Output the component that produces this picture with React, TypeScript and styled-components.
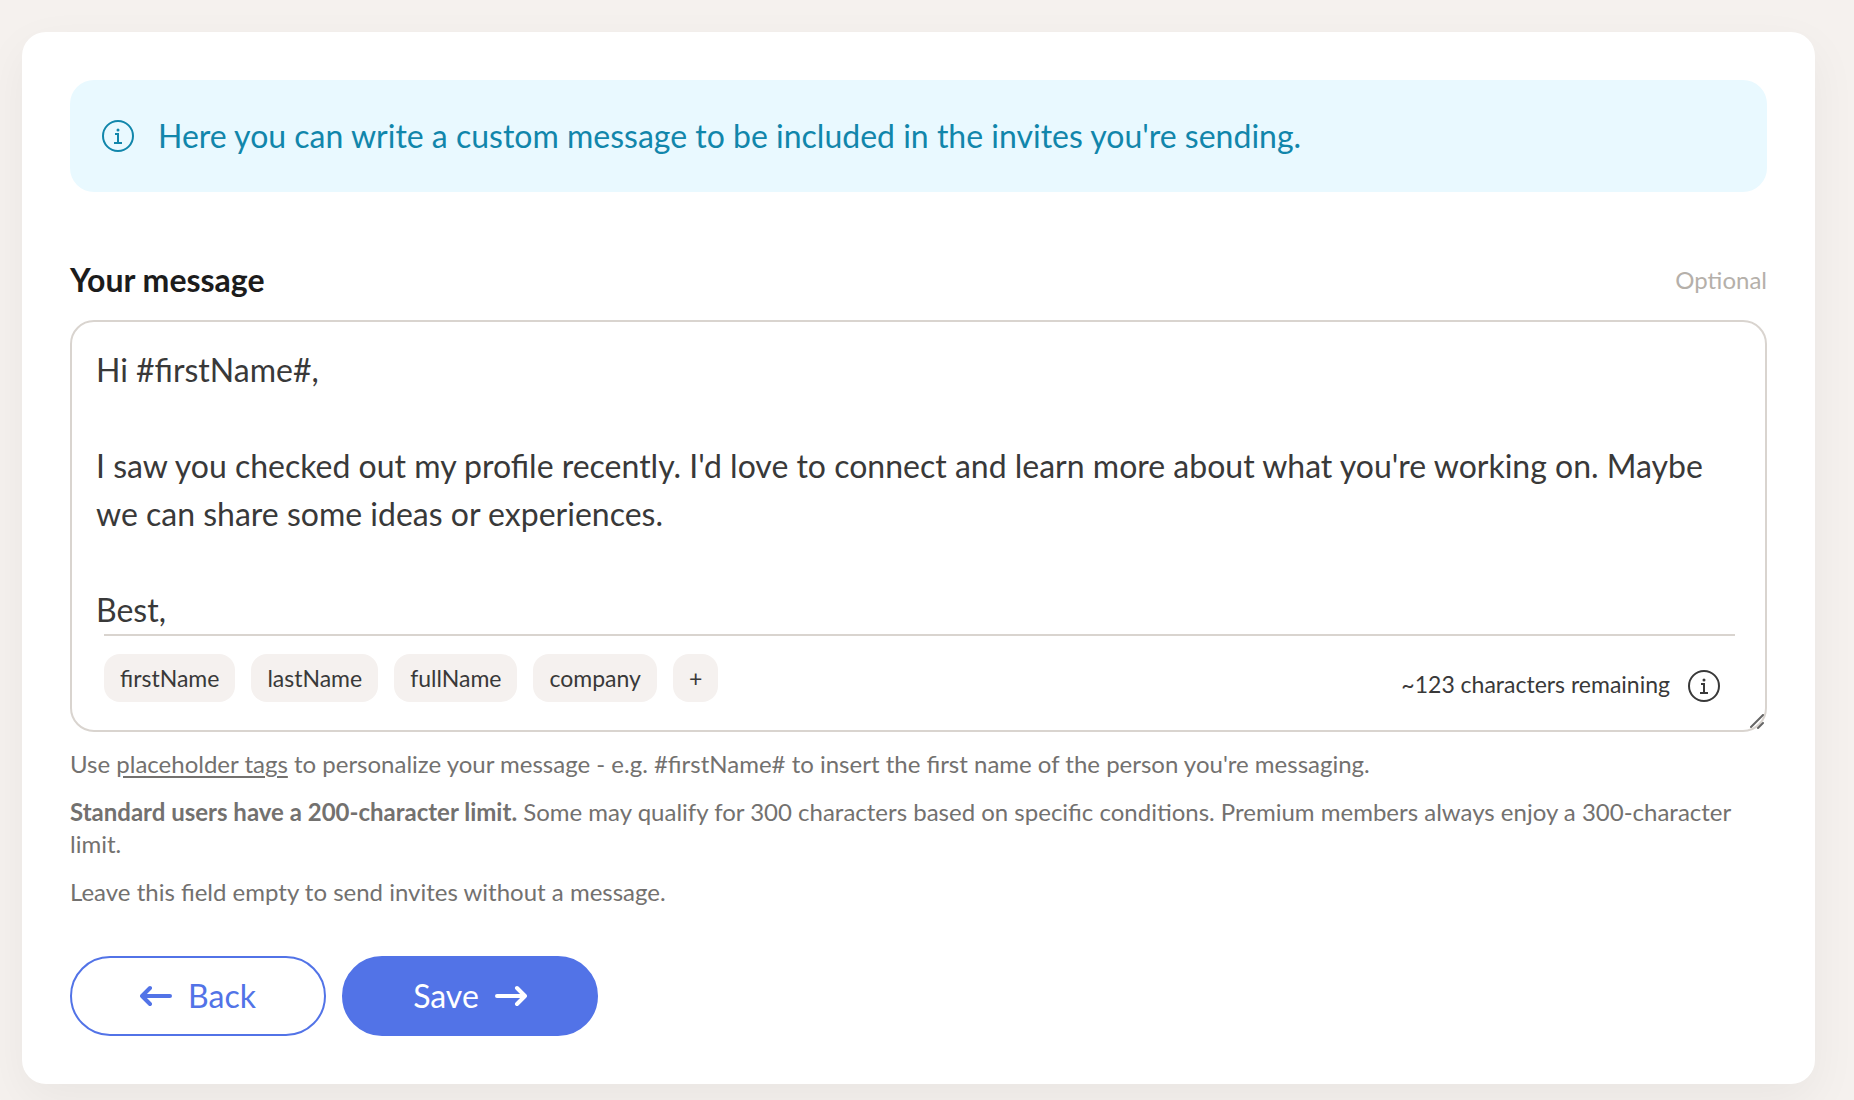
import React, { useState } from "react";
import styled, { createGlobalStyle, css } from "styled-components";

const color = {
  page: "#f5f1ee",
  ink: "#1c1c1c",
  text: "#393939",
  muted: "#73716f",
  faint: "#b5b0aa",
  line: "#d9d4cf",
  chip: "#f5f1ef",
  info: "#1186ab",
  infoBg: "#e9f9ff",
  primary: "#5273e7",
};

const GlobalStyle = createGlobalStyle`
  *, *::before, *::after { box-sizing: border-box; }
  body {
    margin: 0;
    background: ${color.page};
    color: ${color.text};
    font-family: Lato, "Liberation Sans", sans-serif;
    font-size: 24px;
    line-height: 32px;
  }
`;

const Page = styled.main`
  min-height: 100vh;
  padding: 32px 39px 16px 22px;
`;

const Card = styled.form`
  padding: 48px;
  border-radius: 24px;
  background: #fff;
  box-shadow: 0 16px 48px rgba(0, 0, 0, 0.05);
`;

const Banner = styled.div`
  display: flex;
  align-items: center;
  gap: 24px;
  padding: 32px;
  margin-bottom: 64px;
  border-radius: 24px;
  background: ${color.infoBg};
  color: ${color.info};
  font-size: 32px;
  line-height: 48px;
`;

const FieldHeader = styled.div`
  display: flex;
  align-items: center;
  justify-content: space-between;
  margin-bottom: 16px;
`;

const Label = styled.label`
  color: ${color.ink};
  font-size: 32px;
  font-weight: 700;
  line-height: 48px;
`;

const Optional = styled.span`
  color: ${color.faint};
`;

const Editor = styled.div`
  position: relative;
  border: 2px solid ${color.line};
  border-radius: 24px;
`;

const MessageInput = styled.textarea`
  display: block;
  width: 100%;
  height: 312px;
  padding: 24px 24px 0;
  border: 0;
  border-radius: 24px 24px 0 0;
  outline: 0;
  overflow: hidden;
  resize: none;
  background: transparent;
  color: ${color.text};
  font: inherit;
  font-size: 32px;
  line-height: 48px;
`;

const EditorFooter = styled.div`
  display: flex;
  align-items: flex-end;
  justify-content: space-between;
  margin: 0 30px 0 32px;
  padding: 18px 15px 28px 0;
  border-top: 2px solid ${color.line};
  font-size: 23px;
`;

const Tags = styled.div`
  display: flex;
  gap: 16px;
`;

const Tag = styled.button`
  height: 48px;
  padding: 0 16px;
  border: 0;
  border-radius: 16px;
  background: ${color.chip};
  color: ${color.text};
  font: inherit;
  cursor: pointer;
`;

const Counter = styled.div`
  display: flex;
  align-items: flex-start;
  gap: 18px;
  line-height: 28px;
`;

const Grip = styled.svg`
  position: absolute;
  right: 0;
  bottom: 0;
  width: 16px;
  height: 16px;
`;

const Help = styled.p`
  margin: 16px 0 0;
  color: ${color.muted};
`;

const HelpLink = styled.a`
  color: inherit;
  text-decoration: underline;
  text-underline-offset: 3px;
`;

const Actions = styled.div`
  display: flex;
  gap: 16px;
  margin-top: 48px;
`;

const Button = styled.button<{ $primary?: boolean }>`
  display: flex;
  align-items: center;
  justify-content: center;
  gap: 16px;
  width: 256px;
  height: 80px;
  border: 2px solid ${color.primary};
  border-radius: 40px;
  background: #fff;
  color: ${color.primary};
  font: inherit;
  font-size: 32px;
  cursor: pointer;
  ${(p) =>
    p.$primary &&
    css`
      background: ${color.primary};
      color: #fff;
    `}
`;

const InfoIcon = () => (
  <svg width="32" height="32" viewBox="0 0 32 32" fill="none" stroke="currentColor" strokeWidth="2" aria-hidden="true">
    <circle cx="16" cy="16" r="15" />
    <path d="M13 14h3v9M12 23h8" />
    <circle cx="16" cy="10" r="1.5" fill="currentColor" stroke="none" />
  </svg>
);

const Arrow = ({ left }: { left?: boolean }) => (
  <svg width="32" height="24" viewBox="0 0 32 24" fill="none" stroke="currentColor" strokeWidth="4" strokeLinecap="round" strokeLinejoin="round" aria-hidden="true">
    <path d={left ? "M30 12H2M10 4L2 12l8 8" : "M2 12h28M22 4l8 8-8 8"} />
  </svg>
);

const tags = ["firstName", "lastName", "fullName", "company", "+"];

const initialMessage = `Hi #firstName#,

I saw you checked out my profile recently. I'd love to connect and learn more about what you're working on. Maybe we can share some ideas or experiences.

Best,`;

export default function App() {
  const [message, setMessage] = useState(initialMessage);
  const insert = (tag: string) => {
    if (tag !== "+") setMessage((m) => `${m}#${tag}#`);
  };

  return (
    <>
      <GlobalStyle />
      <Page>
        <Card onSubmit={(e) => e.preventDefault()}>
          <Banner>
            <InfoIcon />
            <span>Here you can write a custom message to be included in the invites you're sending.</span>
          </Banner>

          <FieldHeader>
            <Label htmlFor="message">Your message</Label>
            <Optional>Optional</Optional>
          </FieldHeader>

          <Editor>
            <MessageInput id="message" spellCheck={false} value={message} onChange={(e) => setMessage(e.target.value)} />
            <EditorFooter>
              <Tags>
                {tags.map((tag) => (
                  <Tag key={tag} type="button" onClick={() => insert(tag)}>
                    {tag}
                  </Tag>
                ))}
              </Tags>
              <Counter>
                <span>~123 characters remaining</span>
                <InfoIcon />
              </Counter>
            </EditorFooter>
            <Grip viewBox="0 0 16 16" stroke="#666" strokeWidth="2" strokeLinecap="round" aria-hidden="true">
              <path d="M2 13L14 1M9 14l5-5" />
            </Grip>
          </Editor>

          <Help>
            Use <HelpLink href="#placeholder-tags">placeholder tags</HelpLink> to personalize your message - e.g.
            #firstName# to insert the first name of the person you're messaging.
          </Help>
          <Help>
            <strong>Standard users have a 200-character limit.</strong> Some may qualify for 300 characters based on
            specific conditions. Premium members always enjoy a 300-character limit.
          </Help>
          <Help>Leave this field empty to send invites without a message.</Help>

          <Actions>
            <Button type="button">
              <Arrow left />
              Back
            </Button>
            <Button type="submit" $primary>
              Save
              <Arrow />
            </Button>
          </Actions>
        </Card>
      </Page>
    </>
  );
}
